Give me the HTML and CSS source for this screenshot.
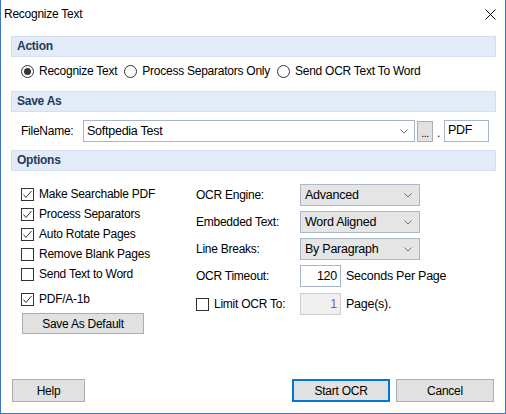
FILE: index.html
```html
<!DOCTYPE html>
<html>
<head>
<meta charset="utf-8">
<title>Recognize Text</title>
<link rel="stylesheet" href="styles.css">
</head>
<body>
<div class="window">
  <div class="titlebar">
    <span class="title">Recognize Text</span>
    <svg class="close" width="11" height="11" viewBox="0 0 11 11"><path d="M0.5 0.5 L10.5 10.5 M10.5 0.5 L0.5 10.5" stroke="#000" stroke-width="1" fill="none"/></svg>
  </div>
  <div class="content">
    <div class="section-head">Action</div>
    <div class="radio-row">
      <label class="radio"><span class="rb checked"></span>Recognize Text</label>
      <label class="radio"><span class="rb"></span>Process Separators Only</label>
      <label class="radio"><span class="rb"></span>Send OCR Text To Word</label>
    </div>

    <div class="section-head">Save As</div>
    <div class="file-row">
      <span class="file-lbl">FileName:</span>
      <div class="combo-edit">
        <span class="combo-text">Softpedia Test</span>
        <svg class="chev" width="8" height="5" viewBox="0 0 8 5"><path d="M0.5 0.5 L4 4 L7.5 0.5" stroke="#707070" fill="none"/></svg>
      </div>
      <div class="browse">...</div>
      <span class="dot">.</span>
      <div class="ext">PDF</div>
    </div>

    <div class="section-head">Options</div>
    <div class="options">
      <div class="opt-left">
        <label class="check"><span class="cb"><svg width="11" height="11" viewBox="0 0 11 11"><path d="M1.5 5.5 L4 8.5 L9.5 2" stroke="#333" fill="none"/></svg></span>Make Searchable PDF</label>
        <label class="check"><span class="cb"><svg width="11" height="11" viewBox="0 0 11 11"><path d="M1.5 5.5 L4 8.5 L9.5 2" stroke="#333" fill="none"/></svg></span>Process Separators</label>
        <label class="check"><span class="cb"><svg width="11" height="11" viewBox="0 0 11 11"><path d="M1.5 5.5 L4 8.5 L9.5 2" stroke="#333" fill="none"/></svg></span>Auto Rotate Pages</label>
        <label class="check"><span class="cb"></span>Remove Blank Pages</label>
        <label class="check"><span class="cb"></span>Send Text to Word</label>
        <label class="check pdfa"><span class="cb"><svg width="11" height="11" viewBox="0 0 11 11"><path d="M1.5 5.5 L4 8.5 L9.5 2" stroke="#333" fill="none"/></svg></span>PDF/A-1b</label>
        <div class="btn default-btn">Save As Default</div>
      </div>
      <div class="opt-right">
        <div class="frow">
          <span class="flbl">OCR Engine:</span>
          <div class="select"><span>Advanced</span><svg class="chev" width="8" height="5" viewBox="0 0 8 5"><path d="M0.5 0.5 L4 4 L7.5 0.5" stroke="#707070" fill="none"/></svg></div>
        </div>
        <div class="frow">
          <span class="flbl">Embedded Text:</span>
          <div class="select"><span>Word Aligned</span><svg class="chev" width="8" height="5" viewBox="0 0 8 5"><path d="M0.5 0.5 L4 4 L7.5 0.5" stroke="#707070" fill="none"/></svg></div>
        </div>
        <div class="frow">
          <span class="flbl">Line Breaks:</span>
          <div class="select"><span>By Paragraph</span><svg class="chev" width="8" height="5" viewBox="0 0 8 5"><path d="M0.5 0.5 L4 4 L7.5 0.5" stroke="#707070" fill="none"/></svg></div>
        </div>
        <div class="frow">
          <span class="flbl">OCR Timeout:</span>
          <div class="num">120</div>
          <span class="unit">Seconds Per Page</span>
        </div>
        <div class="frow last">
          <label class="flbl check-inline"><span class="cb"></span>Limit OCR To:</label>
          <div class="num disabled">1</div>
          <span class="unit">Page(s).</span>
        </div>
      </div>
    </div>
  </div>
  <div class="footer">
    <div class="btn help-btn">Help</div>
    <div class="spacer"></div>
    <div class="btn wide-btn primary">Start OCR</div>
    <div class="btn wide-btn">Cancel</div>
  </div>
</div>
</body>
</html>
```

FILE: styles.css
```css
* { box-sizing: border-box; }
html, body {
  margin: 0;
  padding: 0;
  background: #ffffff;
}
body {
  font-family: "Segoe UI", "Liberation Sans", Arial, sans-serif;
  font-size: 12px;
  letter-spacing: -0.25px;
  color: #000;
}
.window {
  width: 506px;
  height: 414px;
  border: 1px solid #3e74c8;
  border-top: none;
  display: flex;
  flex-direction: column;
  background: #fff;
}
.titlebar {
  height: 30px;
  display: flex;
  align-items: center;
  justify-content: space-between;
  padding: 0 9px 3px 3px;
}
.title {
  font-size: 12px;
  color: #000;
}
.close { display: block; margin-top: 2px; }

.content {
  flex: 1;
  padding: 0 9px 0 10px;
}
.section-head {
  height: 21px;
  margin-top: 6px;
  background: #e2ebf7;
  border: 1px solid #d3dfee;
  font-weight: bold;
  color: #233b5d;
  padding-left: 5px;
  line-height: 19px;
  font-size: 12px;
}
.file-row + .section-head { margin-top: 8px; }

.radio-row {
  height: 28px;
  display: flex;
  align-items: center;
  padding-left: 10px;
  gap: 7px;
}
.radio, .check {
  display: flex;
  align-items: center;
  white-space: nowrap;
}
.rb {
  width: 13px;
  height: 13px;
  border: 1px solid #333;
  border-radius: 50%;
  margin-right: 5px;
  display: flex;
  align-items: center;
  justify-content: center;
  background: #fff;
}
.rb.checked::after {
  content: "";
  width: 7px;
  height: 7px;
  border-radius: 50%;
  background: #333;
}

.file-row {
  margin-top: 8px;
  height: 22px;
  display: flex;
  align-items: center;
  padding-left: 10px;
}
.file-lbl { width: 62px; }
.combo-edit {
  width: 332px;
  height: 22px;
  border: 1px solid #a6b5cb;
  display: flex;
  align-items: center;
  justify-content: space-between;
  padding: 0 6px 0 3px;
  font-size: 12.5px;
}
.browse {
  width: 16px;
  height: 21px;
  margin-left: 2px;
  background: #e1e1e1;
  border: 1px solid #adadad;
  font-size: 11px;
  line-height: 22px;
  text-align: center;
  letter-spacing: -0.5px;
}
.dot {
  width: 11px;
  text-align: center;
  padding-top: 3px;
}
.ext {
  width: 45px;
  height: 22px;
  border: 1px solid #a6b5cb;
  padding-left: 3px;
  line-height: 19px;
  font-size: 12.5px;
}

.options {
  display: flex;
}
.opt-left {
  width: 185px;
  padding-left: 10px;
  padding-top: 13px;
}
.check {
  height: 20px;
}
.check.pdfa { margin-top: 5px; }
.cb {
  width: 13px;
  height: 13px;
  border: 1px solid #333;
  margin-right: 5px;
  display: flex;
  align-items: center;
  justify-content: center;
  background: #fff;
  flex: none;
}
.cb svg { display: block; }
.btn {
  background: #e1e1e1;
  border: 1px solid #adadad;
  display: flex;
  align-items: center;
  justify-content: center;
}
.default-btn {
  width: 122px;
  height: 21px;
  margin-top: 4px;
  margin-left: 1px;
}
.opt-right {
  padding-top: 13px;
  display: flex;
  flex-direction: column;
  gap: 5px;
}
.frow {
  display: flex;
  align-items: center;
  height: 22px;
}
.frow.last { margin-top: 1px; }
.flbl {
  width: 104px;
  display: flex;
  align-items: center;
}
.select {
  width: 120px;
  height: 22px;
  background: #e5e5e5;
  border: 1px solid #acb7c8;
  display: flex;
  align-items: center;
  justify-content: space-between;
  padding: 0 7px 0 4px;
  font-size: 12.5px;
}
.chev { display: block; }
.num {
  width: 41px;
  height: 22px;
  border: 1px solid #a6b5cb;
  text-align: right;
  padding-right: 3px;
  line-height: 20px;
  font-size: 12.5px;
}
.num.disabled {
  background: #f0f0f0;
  border-color: #cccccc;
  color: #6d6d80;
}
.unit { margin-left: 5px; font-size: 12.5px; }

.footer {
  display: flex;
  align-items: center;
  padding: 0 11px 11px 11px;
  gap: 6px;
}
.spacer { flex: 1; }
.footer .btn { height: 23px; }
.help-btn { width: 73px; }
.wide-btn { width: 98px; }
.primary { border: 2px solid #0078d7; }
```
